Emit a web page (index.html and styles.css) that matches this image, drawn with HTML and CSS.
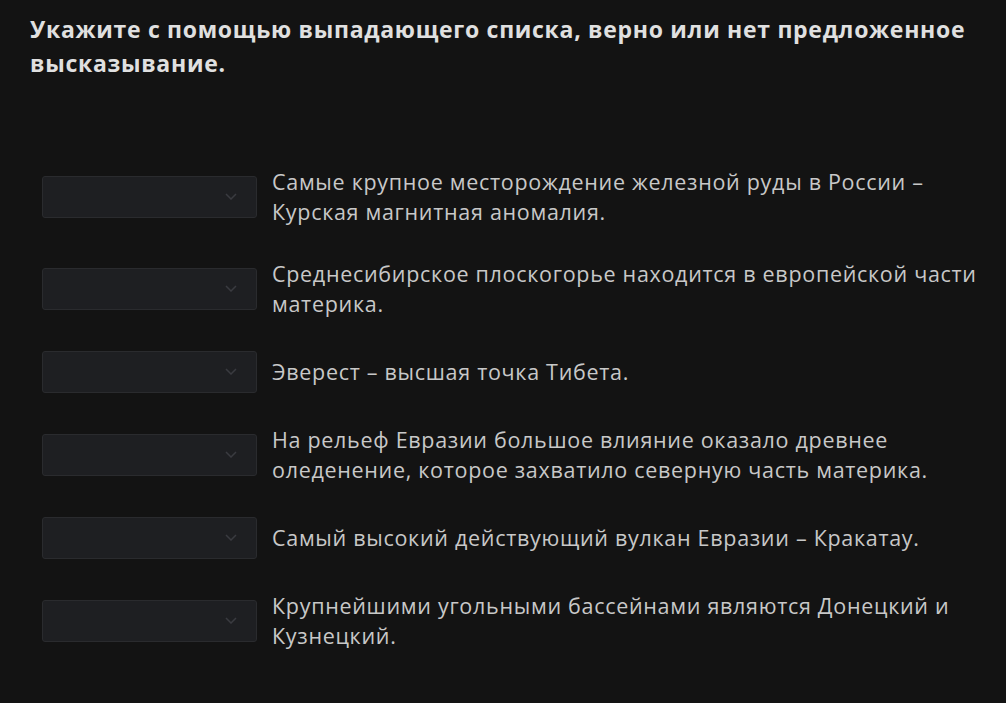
FILE: index.html
```html
<!DOCTYPE html>
<html>
  <head>
    <meta charset="utf-8" />
    <title>Верно или нет</title>
    <link rel="stylesheet" href="styles.css">
  </head>
  <body>
    <div class="task">
      <h1 class="task-title">Укажите с помощью выпадающего списка, верно или нет предложенное высказывание.</h1>

      <div class="statements">
        <div class="statement">
          <div class="select">
            <svg class="chevron" width="12" height="7" viewBox="0 0 12 7"><polyline points="1,1 6,6 11,1" /></svg>
          </div>
          <div class="statement-text">Самые крупное месторождение железной руды в России – Курская магнитная аномалия.</div>
        </div>
        <div class="statement">
          <div class="select">
            <svg class="chevron" width="12" height="7" viewBox="0 0 12 7"><polyline points="1,1 6,6 11,1" /></svg>
          </div>
          <div class="statement-text">Среднесибирское плоскогорье находится в европейской части материка.</div>
        </div>
        <div class="statement">
          <div class="select">
            <svg class="chevron" width="12" height="7" viewBox="0 0 12 7"><polyline points="1,1 6,6 11,1" /></svg>
          </div>
          <div class="statement-text">Эверест – высшая точка Тибета.</div>
        </div>
        <div class="statement">
          <div class="select">
            <svg class="chevron" width="12" height="7" viewBox="0 0 12 7"><polyline points="1,1 6,6 11,1" /></svg>
          </div>
          <div class="statement-text">На рельеф Евразии большое влияние оказало древнее оледенение, которое захватило северную часть материка.</div>
        </div>
        <div class="statement">
          <div class="select">
            <svg class="chevron" width="12" height="7" viewBox="0 0 12 7"><polyline points="1,1 6,6 11,1" /></svg>
          </div>
          <div class="statement-text">Самый высокий действующий вулкан Евразии – Кракатау.</div>
        </div>
        <div class="statement">
          <div class="select">
            <svg class="chevron" width="12" height="7" viewBox="0 0 12 7"><polyline points="1,1 6,6 11,1" /></svg>
          </div>
          <div class="statement-text">Крупнейшими угольными бассейнами являются Донецкий и Кузнецкий.</div>
        </div>
      </div>
    </div>
  </body>
</html>
```

FILE: styles.css
```css
html,
body {
  margin: 0;
  background-color: #131313;
}
body {
  font-family: 'Open Sans', 'Noto Sans', sans-serif;
  color: #c8c8c8;
}
.task {
  padding: 12px 30px 0 30px;
}
.task-title {
  margin: 0;
  font-size: 23px;
  line-height: 34px;
  letter-spacing: 0.7px;
  font-weight: 700;
  color: #e0e0e0;
}
.statements {
  display: flex;
  flex-direction: column;
  gap: 32px;
  margin-top: 87px;
  padding-left: 12px;
  width: 945px;
}
.statement {
  display: flex;
  align-items: center;
}
.select {
  position: relative;
  flex: none;
  width: 213px;
  height: 40px;
  margin-right: 15px;
  background-color: #1e1f22;
  border: 1px solid #2a2b2e;
  border-radius: 3px;
}
.chevron {
  position: absolute;
  right: 19px;
  top: 16px;
}
.chevron polyline {
  fill: none;
  stroke: #3a3b40;
  stroke-width: 1.5;
}
.statement-text {
  font-size: 21.5px;
  line-height: 30px;
  letter-spacing: 0.7px;
}
```
